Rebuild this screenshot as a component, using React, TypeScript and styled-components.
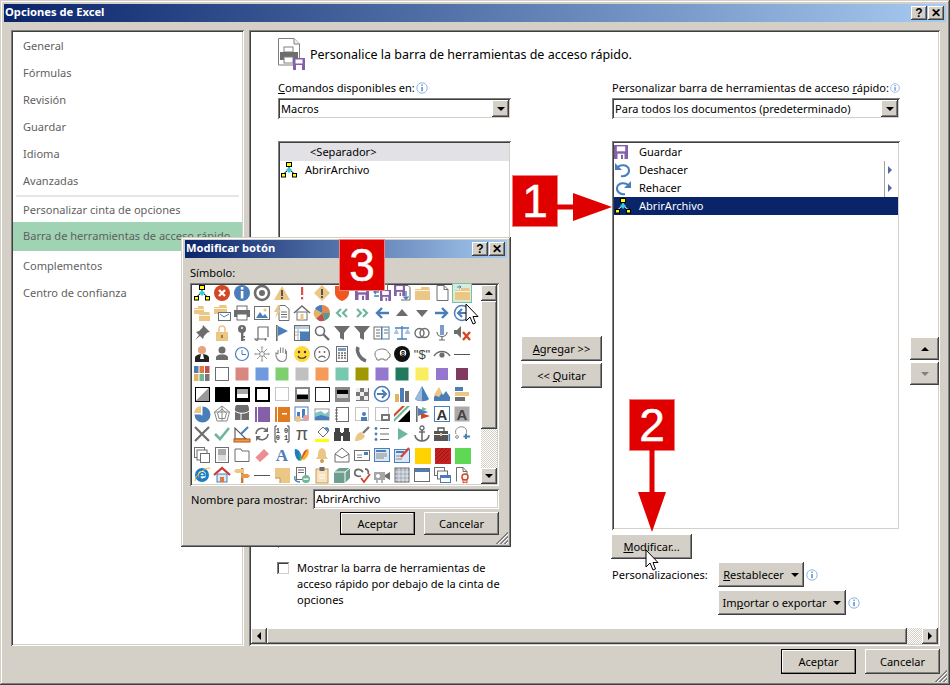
import React from "react";
import styled, { createGlobalStyle } from "styled-components";

const Global = createGlobalStyle`
  html, body { margin: 0; padding: 0; background: #d4d0c8; overflow: hidden; }
  * { box-sizing: border-box; }
  #root { width: 950px; height: 685px; }
`;

const FONT = `"Noto Sans", "Open Sans", "DejaVu Sans", sans-serif`;
const raised = `inset -1px -1px 0 #404040, inset 1px 1px 0 #fff, inset -2px -2px 0 #808080, inset 2px 2px 0 #d4d0c8`;
const sunken = `inset 1px 1px 0 #808080, inset -1px -1px 0 #fff, inset 2px 2px 0 #404040, inset -2px -2px 0 #d4d0c8`;
const dither = `repeating-conic-gradient(#fff 0 25%, #d4d0c8 0 50%) 0 0 / 2px 2px`;

const Win = styled.div`
  position: relative; width: 950px; height: 685px; background: #d4d0c8;
  box-shadow: inset -1px -1px 0 #404040, inset 1px 1px 0 #d4d0c8, inset -2px -2px 0 #808080, inset 2px 2px 0 #fff;
  padding: 4px; display: flex; flex-direction: column;
  font: 11.05px ${FONT}; color: #000; overflow: hidden;
`;
const TitleBar = styled.div`
  height: 18px; flex: none; display: flex; align-items: center; padding: 0 2px 0 1px;
  background: linear-gradient(90deg, #0a246a, #a6caf0); color: #fff; font-weight: 700;
  font-size: 11.2px;
`;
const TitleText = styled.span`flex: 1; line-height: 16px; padding-bottom: 2px;`;
const CapBtn = styled.div`
  width: 16px; height: 14px; margin-left: 1px; background: #d4d0c8; box-shadow: ${raised};
  color: #000; font: 700 12px/14px "Liberation Sans", sans-serif; text-align: center;
`;
const Body = styled.div`
  flex: 1; min-height: 0; display: flex; gap: 5px; padding: 8px 6px 3px 7px;
`;
const Sidebar = styled.div`
  width: 233px; flex: none; background: #fff; box-shadow: ${sunken}; padding: 3px 2px 2px; display: flex; flex-direction: column;
`;
const NavItem = styled.div<{ $on?: boolean }>`
  height: ${p => (p.$on ? 29 : 27)}px; flex: none; line-height: ${p => (p.$on ? 27 : 26)}px; padding-left: 10px; color: #5f5f5f; white-space: nowrap;
  background: ${p => (p.$on ? "#9fd3b3" : "transparent")};
  margin: ${p => (p.$on ? "-2px 0 2px" : "0")};
`;
const NavSep = styled.div`
  height: 2px; background: #e6e6e6; margin: 0 3px; flex: none;
`;
const Main = styled.div`
  flex: 1; min-width: 0; background: #fff; box-shadow: ${sunken}; padding: 2px; display: flex; flex-direction: column;
`;
const Content = styled.div`
  flex: 1; min-height: 0; padding: 6px 0 0 27px; display: flex; flex-direction: column;
`;
const Heading = styled.div`
  height: 32px; flex: none; display: flex; align-items: center; gap: 4px; font-size: 12.5px;
`;
const Columns = styled.div`
  flex: 1; display: flex; margin-top: 8px;
`;
const Col = styled.div<{ $w: number; $ml?: number; $pt?: number }>`
  width: ${p => p.$w}px; margin-left: ${p => p.$ml ?? 0}px; padding-top: ${p => p.$pt ?? 0}px;
  flex: none; display: flex; flex-direction: column;
`;
const Label = styled.div`
  height: 20px; line-height: 18px; white-space: nowrap; display: flex; align-items: center; gap: 1px;
`;
const Select = styled.div`
  height: 21px; background: #fff; box-shadow: ${sunken}; display: flex; align-items: center; padding: 2px 2px 2px 3px;
`;
const SelectText = styled.span`flex: 1; white-space: nowrap;`;
const DropBtn = styled.div`
  width: 17px; height: 17px; background: #d4d0c8; box-shadow: ${raised}; display: flex; align-items: center; justify-content: center;
`;
const Tri = styled.span<{ $c?: string; $up?: boolean }>`
  width: 0; height: 0; border-left: 4px solid transparent; border-right: 4px solid transparent;
  ${p => (p.$up ? "border-bottom" : "border-top")}: 4px solid ${p => p.$c ?? "#000"};
`;
const ListBox = styled.div<{ $h: number; $mt: number }>`
  height: ${p => p.$h}px; margin-top: ${p => p.$mt}px; background: #fff; box-shadow: ${sunken}; padding: 2px; flex: none;
`;
const Row = styled.div<{ $bg?: string; $fg?: string }>`
  height: 18px; display: flex; align-items: center; line-height: 18px;
  background: ${p => p.$bg ?? "transparent"}; color: ${p => p.$fg ?? "#000"}; position: relative;
`;
const RowText = styled.span<{ $ml: number }>`margin-left: ${p => p.$ml}px; white-space: nowrap;`;
const SubMark = styled.span`
  position: absolute; right: 6px; top: 0; bottom: 0; width: 8px; border-left: 1px solid #a0a0a0; display: flex; align-items: center; justify-content: flex-end;
  &::after { content: ""; border-left: 4px solid #4e68a8; border-top: 4px solid transparent; border-bottom: 4px solid transparent; }
`;
const Btn = styled.div<{ $w: number; $def?: boolean; $h?: number }>`
  width: ${p => p.$w}px; height: ${p => p.$h ?? 25}px; flex: none; background: #d4d0c8;
  display: flex; align-items: center; justify-content: center; gap: 7px; white-space: nowrap;
  box-shadow: ${p => (p.$def ? `inset 0 0 0 1px #000, inset -2px -2px 0 #808080, inset 2px 2px 0 #fff` : raised)};
`;
const ModifyBtn = styled(Btn)`margin: 4px 0 0 -1px;`;
const MidStack = styled.div`display: flex; flex-direction: column; gap: 2px;`;
const CheckRow = styled.div`
  display: flex; gap: 8px; margin-top: 12px; line-height: 16px; margin-left: -1px;
`;
const CheckBox = styled.div`
  width: 12px; height: 12px; margin-top: 2px; flex: none; background: #fff; box-shadow: inset 1px 1px 0 #808080, inset -1px -1px 0 #d4d0c8, inset 2px 2px 0 #404040;
`;
const CustomRow = styled.div`
  display: flex; margin-top: 3px; align-items: flex-start;
`;
const CustomLabel = styled.div`width: 106px; margin-top: 5px; flex: none; white-space: nowrap;`;
const CustomBtns = styled.div`display: flex; flex-direction: column; gap: 3px;`;
const BtnWithInfo = styled.div`display: flex; gap: 2px; align-items: center;`;
const HScroll = styled.div`
  height: 16px; flex: none; display: flex; background: ${dither};
`;
const SBtn = styled.div<{ $w?: number; $h?: number }>`
  width: ${p => p.$w ?? 16}px; height: ${p => p.$h ?? 16}px; flex: none; background: #d4d0c8; box-shadow: ${raised};
  display: flex; align-items: center; justify-content: center;
`;
const HThumb = styled.div`width: 640px; flex: none; background: #d4d0c8; box-shadow: ${raised};`;
const HFill = styled.div`flex: 1;`;
const TriH = styled.span<{ $left?: boolean }>`
  width: 0; height: 0; border-top: 4px solid transparent; border-bottom: 4px solid transparent;
  ${p => (p.$left ? "border-right" : "border-left")}: 4px solid #000;
`;
const Footer = styled.div`
  height: 32px; flex: none; display: flex; justify-content: flex-end; gap: 9px; padding: 0 6px 0 0; align-items: flex-start;
`;
const Grip = styled.svg`position: absolute; right: 3px; bottom: 3px;`;

/* dialog: a window over the page */
const Dialog = styled.div`
  position: absolute; left: 181px; top: 237px; width: 330px; height: 310px; background: #d4d0c8;
  box-shadow: inset -1px -1px 0 #404040, inset 1px 1px 0 #d4d0c8, inset -2px -2px 0 #808080, inset 2px 2px 0 #fff;
  padding: 3px 4px 4px; display: flex; flex-direction: column;
`;
const DlgBody = styled.div`padding: 0 8px 0 5px; flex: 1; display: flex; flex-direction: column;`;
const SymLabel = styled.div`height: 25px; line-height: 29px;`;
const IconBox = styled.div`
  height: 203px; flex: none; background: #fff; box-shadow: ${sunken}; padding: 2px; display: flex; justify-content: space-between;
`;
const IconGrid = styled.div`
  display: grid; grid-template-columns: repeat(14, 20px); grid-template-rows: repeat(10, 20.2px); margin-top: -2px; height: 202px; width: 280px;
`;
const IconCell = styled.div<{ $sel?: boolean }>`
  display: flex; align-items: center; justify-content: center;
  ${p => (p.$sel ? "background: #d6ecdf; outline: 1px solid #7fbf9f; outline-offset: -1px;" : "")}
`;
const VScroll = styled.div`
  width: 16px; display: flex; flex-direction: column; background: ${dither};
`;
const VThumb = styled.div`height: 128px; flex: none; background: #d4d0c8; box-shadow: ${raised};`;
const VFill = styled.div`flex: 1;`;
const NameRow = styled.div`display: flex; align-items: center; height: 20px; margin-top: 3px;`;
const NameLabel = styled.div`width: 123px; padding-left: 1px; flex: none; white-space: nowrap;`;
const NameInput = styled.div`
  flex: 1; height: 20px; background: #fff; box-shadow: ${sunken}; padding-left: 3px; line-height: 20px;
`;
const DlgBtns = styled.div`display: flex; justify-content: flex-end; gap: 9px; margin-top: 3px;`;

/* annotations over the screenshot */
const Badge = styled.div<{ $x: number; $y: number }>`
  position: absolute; left: ${p => p.$x}px; top: ${p => p.$y}px; width: 44px; height: 50px; background: #e00000;
  outline: 1px solid #f08080; color: #fff; font: 400 46px/50px "Liberation Sans", sans-serif; text-align: center;
  -webkit-text-stroke: 0.5px #fff;
`;
const Overlay = styled.svg<{ $x: number; $y: number }>`
  position: absolute; left: ${p => p.$x}px; top: ${p => p.$y}px; overflow: visible;
`;

/* drawing helpers */
const F = (d: string, c: string) => <path d={d} fill={c} />;
const S = (d: string, c: string, w = 1) => <path d={d} fill="none" stroke={c} strokeWidth={w} />;
const R = (x: number, y: number, w: number, h: number, c: string, s?: string) => (
  <rect x={x} y={y} width={w} height={h} fill={c} stroke={s} />
);
const C = (x: number, y: number, r: number, c: string, s?: string, sw = 1) => (
  <circle cx={x} cy={y} r={r} fill={c} stroke={s} strokeWidth={sw} />
);
const T = (x: number, y: number, t: string, c: string, size = 14, weight = 400, fam = "Liberation Sans") => (
  <text x={x} y={y} fill={c} fontSize={size} fontWeight={weight} fontFamily={`"${fam}", sans-serif`} textAnchor="middle">{t}</text>
);
const P = "#8560a8", TAN = "#ecc685", B = "#4a7ebb", G = "#6d6d6d", GR = "#6fb79a", RD = "#d24726";

const sitemap = <>{S("M9 4V8M3.5 13L9 8L14.5 13", "#000")}{R(6.5, 1.5, 5, 4, "#ff0", "#000")}{F("M9 6L12 9L9 12L6 9Z", "#3cd")}{R(1.5, 12.5, 4, 3.5, "#ff0", "#000")}{R(12.5, 12.5, 4, 3.5, "#ff0", "#000")}</>;
const sitemapWhite = <>{S("M9 4V8M3.5 13L9 8L14.5 13", "#fff")}{R(6.5, 1.5, 5, 4, "#ff0", "#000")}{F("M9 6L12 9L9 12L6 9Z", "#3cd")}{R(1.5, 12.5, 4, 3.5, "#ff0", "#000")}{R(12.5, 12.5, 4, 3.5, "#ff0", "#000")}</>;
const save = (x = 2, y = 2, s = 14) => <>{R(x, y, s, s, P)}{R(x + s * .2, y + s * .1, s * .6, s * .35, "#fff")}{R(x + s * .25, y + s * .62, s * .5, s * .38, "#fff")}{R(x + s * .5, y + s * .7, s * .14, s * .3, P)}</>;
const folder = (x = 2, y = 3, w = 15, h = 12) => <>{F(`M${x} ${y + 2}h${w * .4}v-2h${w * .55}v2h${w * .05}v${h - 2}h-${w}z`, TAN)}{R(x, y + 3, w, .8, "#fff")}</>;
const sq = (c: string, s?: string) => <>{R(2.5, 2.5, 13, 13, c, s)}</>;
const dashed = <rect x="2.5" y="2.5" width="13" height="13" fill="none" stroke="#888" strokeDasharray="1 1" />;

const rows: React.ReactNode[][] = [
  [
    sitemap,
    <>{C(9, 9, 8, RD)}{S("M6 6L12 12M12 6L6 12", "#fff", 2.4)}</>,
    <>{C(9, 9, 8, B)}{R(7.8, 3, 2.6, 2.6, "#fff")}{R(7.8, 7, 2.6, 7.5, "#fff")}</>,
    <>{C(9, 9, 7, "none", G, 2.6)}{C(9, 9, 3, G)}</>,
    <>{F("M9 2L17 16H1Z", TAN)}{R(8, 6, 2, 6, "#555")}{R(8, 13, 2, 2, "#555")}</>,
    <>{R(8, 3, 2.2, 8, "#d9534f")}{R(8, 13, 2.2, 2.4, "#d9534f")}</>,
    <>{F("M9 1L17 9L9 17L1 9Z", TAN)}{R(8, 5, 2, 6, "#555")}{R(8, 12, 2, 2, "#555")}</>,
    <>{F("M2 2H16V9C16 13 12 16 9 17C6 16 2 13 2 9Z", "#f0561f")}</>,
    save(2, 2, 14),
    <>{R(6.5, .5, 8, 6, "#fff", G)}{save(7, 6, 11)}{S("M1 8H6M3 6L1 8L3 10M1 12H6", B, 1.3)}</>,
    <>{S("M11 1.5H15L17 3.5V16H8", G)}{save(1, 1, 11)}{S("M13 7V15M10.5 12.5L13 15L15.5 12.5", B, 1.4)}</>,
    folder(2, 3, 15, 13),
    <>{F("M4 1.5H11L15 5.5V16.5H4Z", "#fff")}{S("M4 1.5H11L15 5.5V16.5H4ZM11 1.5V5.5H15", G)}</>,
    <>{folder(2, 4, 15, 12)}{S("M4 3H8M6.5 1.5L8 3L6.5 4.5", B)}</>,
  ],
  [
    <>{folder(1, 2, 10, 8)}{folder(6, 8, 11, 9)}</>,
    <>{folder(1, 1, 13, 9)}{R(5.5, 8.5, 12, 8, "#fff", G)}{S("M7 10L11 13L16 10", B)}</>,
    <>{R(4, 2, 10, 5, "#fff", G)}{R(1, 6, 16, 7, G)}{R(4, 10, 10, 6, "#fff", G)}</>,
    <>{R(1.5, 2.5, 15, 13, "#fff", G)}{F("M3 14L7 8L10 12L12 10L15 14Z", B)}{C(12, 6, 1.6, TAN)}</>,
    <>{F("M6 1.5H12L16 5V16.5H6Z", "#fff")}{S("M6 1.5H12L16 5V16.5H6ZM8 8H14M8 10.5H14M8 13H14", G)}{F("M5 1L1 8H4L2 14L8 6H5L7 1Z", TAN)}</>,
    <>{S("M1 9L9 2L17 9", G, 1.6)}{R(4, 8, 10, 8, "#fff", G)}{R(7.5, 10, 3, 6, TAN)}</>,
    <>{F("M9 9V1A8 8 0 0 1 17 9Z", "#e08a50")}{F("M9 9H17A8 8 0 0 1 12 16.5Z", "#5a9a8a")}{F("M9 9L12 16.5A8 8 0 0 1 3 14.5Z", "#c0504d")}{F("M9 9L3 14.5A8 8 0 0 1 2 5Z", "#e5b25d")}{F("M9 9L2 5A8 8 0 0 1 9 1Z", B)}</>,
    <>{S("M8 5L4 9L8 13M14 5L10 9L14 13", GR, 2.2)}</>,
    <>{S("M4 5L8 9L4 13M10 5L14 9L10 13", GR, 2.2)}</>,
    <>{S("M9 4L4 9L9 14M4 9H16", B, 2.4)}</>,
    <>{F("M9 5L15 12H3Z", G)}</>,
    <>{F("M9 13L15 6H3Z", G)}</>,
    <>{S("M9 4L14 9L9 14M14 9H2", B, 2.4)}</>,
    <>{C(9, 9, 7.5, "#fff", B, 1.5)}{S("M9 5L5 9L9 13M5 9H14", B, 2)}</>,
  ],
  [
    <>{F("M10 1L17 8L14.5 8.5L11 12L10 15L7 12L2 16L6 11L3 8L6 7L9.5 3.5Z", G)}</>,
    <>{S("M6 8V5a3 3 0 0 1 6 0V8", TAN, 1.6)}{R(3, 8, 12, 9, TAN)}{R(8, 11, 2, 3, "#a07a3a")}</>,
    <>{C(9, 5, 4, G)}{R(8, 8, 2.4, 9, G)}{R(10, 12, 2, 1.6, G)}{R(10, 15, 2, 1.6, G)}{C(9, 4, 1, "#fff")}</>,
    <>{S("M5 3H15V13M5 3V15C5 17 3 17 2 15H12C12 17 13 16 13 14", G, 1.2)}</>,
    <>{R(3, 1, 1.6, 16, G)}{F("M5 2L15 7L5 12Z", B)}</>,
    <>{R(1.5, 1.5, 15, 15, "#fff", G)}{R(2, 2, 14, 3, "#b8cce0")}{S("M2 8H8M2 11H6M5 5V16", "#b0b0b0")}{R(7, 7.5, 9, 8.5, B)}</>,
    <>{C(7, 7, 4.5, "#fff", G, 1.6)}{S("M10.5 10.5L16 16", G, 2.4)}</>,
    <>{F("M1 2H17L11 9V16L7 14V9Z", G)}</>,
    <>{F("M1 2H17L11 9V16L7 14V9Z", G)}</>,
    <>{R(1, 3, 7.5, 12, "#fff", G)}{R(9, 3, 7, 12, "#fff", B)}{S("M3 6H7M3 9H7M3 12H7M11 6H15M11 9H15", G)}</>,
    <>{S("M9 2V15M4 15H14M2 4H16", B, 1.3)}{F("M.5 10H6L3.3 4.5ZM11.5 10H17.5L14.5 4.5Z", "#a9c4e0")}</>,
    <>{C(6.5, 9, 4.5, "none", G, 1.4)}{C(11.5, 9, 4.5, "none", G, 1.4)}</>,
    <>{R(7, 1, 4, 10, "#7a9cc6")}{S("M4 8C4 14 14 14 14 8M9 13V16M6 16H12", G, 1.2)}</>,
    <>{F("M1 6H4L8 2V14L4 10H1Z", G)}{S("M10 8L17 16M17 8L10 16", RD, 2.4)}</>,
  ],
  [
    <>{C(9, 5, 4, "#e6a57e")}{F("M2 17V12C3 10 6 9 9 9C12 9 15 10 16 12V17Z", "#222")}{F("M8 9H10L11 14H7Z", "#fff")}</>,
    <>{C(9, 5, 3.5, G)}{F("M3 15V12C4 10 6 9.5 9 9.5C12 9.5 14 10 15 12V15Z", G)}</>,
    <>{C(9, 9, 6.5, "#fff", B, 1.2)}{S("M9 5V9.5H13", B)}</>,
    <>{S("M9 2V16M2 9H16M4 4L14 14M14 4L4 14", "#999", 1)}{C(9, 9, 2.4, "#fff", "#888")}{C(9, 2.5, 1.3, "#bbb")}{C(9, 15.5, 1.3, "#bbb")}{C(2.5, 9, 1.3, "#bbb")}{C(15.5, 9, 1.3, "#bbb")}</>,
    <>{S("M5 9V5M7.5 8V2.5M10 8V2.5M12.5 9V4M5 9L3 8V11C4 15 6 16.5 9 16.5C12 16.5 13.5 14 13.5 11V6", "#888", 1.1)}</>,
    <>{C(9, 9, 8, "#ffd93b")}{C(6, 7, 1.2, "#333")}{C(12, 7, 1.2, "#333")}{S("M5 11C6 14 12 14 13 11", "#333", 1.1)}</>,
    <>{C(9, 9, 7.5, "#fff", G, 1.2)}{C(6.5, 7, 1, G)}{C(11.5, 7, 1, G)}{S("M5.5 13C7 10.5 11 10.5 12.5 13", G, 1.1)}</>,
    <>{R(3.5, 1.5, 11, 15, "#fff", G)}{R(5, 3, 8, 3, "#7a9cc6")}{S("M5 8h2M8 8h2M11 8h2M5 10.5h2M8 10.5h2M11 10.5h2M5 13h2M8 13h2M11 13h2", G, 1.4)}</>,
    <>{S("M5 2C3 7 7 14 13 16", G, 3.4)}</>,
    <>{F("M2 9C2 5 6 4 10 4C13 4 15 6 15.5 8L17 9V12L15 13L14 15H11V14H7V15H4L3.5 13C2.5 12 2 11 2 9Z", "#fff")}{S("M2 9C2 5 6 4 10 4C13 4 15 6 15.5 8L17 9V12L15 13L14 15H11V14H7V15H4L3.5 13C2.5 12 2 11 2 9Z", "#777")}</>,
    <>{C(9, 9, 8, "#111")}{C(10, 8, 3.2, "#fff")}{T(10, 10.5, "8", "#000", 7, 700)}</>,
    <>{T(9, 14, '"$"', "#444", 13)}</>,
    <>{S("M1 11C5 5 13 5 17 11", G, 1.4)}{C(9, 10, 2.6, G)}</>,
    <>{R(1, 9, 16, 1, "#555")}</>,
  ],
  [
    <>{R(1, 1, 4.5, 7, "#4a7ebb")}{R(6.5, 1, 4.5, 7, "#e07b39")}{R(12, 1, 4.5, 7, "#c0504d")}{R(1, 9, 4.5, 7, "#e5b25d")}{R(6.5, 9, 4.5, 7, "#6fb79a")}{R(12, 9, 4.5, 7, "#777")}</>,
    sq("#fff", G), sq("#d98880"), sq("#6f9ae0"), sq("#7ed06f"), sq("#c0c0c0"), sq("#f49b5a"), sq("#78c8b0"), sq("#a09800"), sq("#9478d0"), sq("#217a5e"), sq("#f8ee60"),
    <>{R(3, 3, 12, 12, "#9478d0")}</>, <>{R(3, 3, 12, 12, "#803a60")}</>,
  ],
  [
    <>{R(2, 2, 15, 15, "#000")}{F("M3 16L16 3V16Z", "#999")}{F("M3 3H16L3 16Z", "#fff")}</>,
    <>{R(2, 2, 15, 15, "#000")}</>,
    <>{R(2, 2, 15, 15, "#000")}{R(4, 4, 11, 5, "#a9a9a9")}{R(4, 9, 11, 4, "#fff")}</>,
    <>{R(2, 2, 15, 15, "#000")}{R(4, 4, 11, 11, "#fff")}</>,
    dashed,
    <>{R(2, 2, 15, 15, "#888")}{R(4, 4, 11, 5, "#fff")}{R(4, 10, 11, 4, "#000")}</>,
    <>{R(2.5, 2.5, 14, 14, "#fff", "#222")}</>,
    <>{R(2, 2, 15, 15, "#888")}{R(4, 5, 11, 4, "#000")}{R(4, 9, 11, 4, "#ccc")}</>,
    <>{R(3, 3, 13, 13, "#777")}{R(3, 3, 4, 4, "#eee")}{R(11, 3, 4, 4, "#eee")}{R(7, 7, 4, 4, "#eee")}{R(3, 11, 4, 4, "#eee")}{R(11, 11, 4, 4, "#eee")}</>,
    <>{C(9, 9, 7.5, "#fff", B, 1.6)}{S("M9 5L13 9L9 13M13 9H4", B, 2)}</>,
    <>{R(2, 9, 4, 8, "#e5b25d")}{R(7, 3, 4, 14, B)}{R(12, 6, 4, 11, G)}</>,
    <>{F("M9 1L16 14C14 17 4 17 2 14Z", B)}{F("M9 1V16C6 16 4 15 2 14Z", "#9cbad9")}</>,
    <>{F("M1 12L6 3L10 10L13 6L17 12V16H1Z", B)}{F("M1 10L6 2L9 8L6 12Z", TAN)}</>,
    <>{R(2, 2, 8, 4, B)}{R(2, 7, 14, 4, TAN)}{R(2, 12, 10, 4, G)}</>,
  ],
  [
    <>{F("M8 8V1A8 8 0 0 0 1 8Z", TAN)}{F("M9.5 1.5A8 8 0 1 1 1.5 9.5L8 9.5C8 11 9.5 11 9.5 9.5Z", B)}</>,
    <>{S("M9 1L16.5 7L14 16H4L1.5 7ZM9 4L13.5 8L12 13.5H6L4.5 8ZM9 1V16M1.5 7L16.5 7", "#888")}</>,
    <>{R(2, 4, 14, 11, G)}{C(9, 4, 7, G)}{S("M2 6C5 9 13 9 16 6M8 8V16", "#fff")}</>,
    <>{R(2, 2, 15, 15, P)}{R(4, 2, 1, 15, "#fff")}</>,
    <>{R(2, 2, 15, 15, "#e07b1f")}{R(4, 2, 1, 15, "#fff")}{R(9, 8, 5, 1.5, "#fff")}</>,
    <>{R(2, 2, 13, 13, "#fff", B)}{R(4, 7, 3, 6, B)}{R(9, 4, 3, 9, B)}{C(5, 14, 3, TAN)}{C(13, 13, 3, "#e8a0a0")}</>,
    <>{R(2, 4, 14, 11, "#fff", "#999")}{F("M2 8L8 6L12 9L16 6V12L2 12Z", "#7fc4c0")}{F("M2 12L8 10L16 12V15H2Z", B)}</>,
    <>{R(3.5, 2.5, 12, 14, "#fff", G)}{S("M2 5h3M2 8h3M2 11h3M2 14h3", G)}</>,
    <>{dashed}{C(11, 9, 2, B)}{R(8, 12, 6, 4, B)}</>,
    <>{dashed}{R(8, 9, 9, 7, "#777")}{R(10, 11, 5, 3, "#fff")}</>,
    <>{F("M1 14L14 1H17L1 17Z", GR)}{F("M1 9L9 1H12L1 12Z", RD)}{F("M17 5L5 17H17Z", "#000")}</>,
    <>{R(3, 1, 1.6, 16, G)}{F("M5 3L15 7L5 11Z", B)}{F("M8 8L17 11L8 14Z", RD)}{F("M9 2L14 4L9 6Z", GR)}</>,
    <>{R(1.5, 1.5, 15, 15, "#fff", B)}{T(9, 14.5, "A", "#333", 15, 700)}</>,
    <>{R(1.5, 1.5, 15, 15, "#aaa")}{T(9, 14.5, "A", "#444", 15, 700)}</>,
  ],
  [
    <>{S("M2 2L16 16M16 2L2 16", G, 2.2)}</>,
    <>{S("M2 9L7 14L16 3", GR, 2.6)}</>,
    <>{S("M2 14L2 3L13 14Z", "#555", 1.1)}{R(1, 14, 16, 3, "#e5a23b", "#c05020")}{S("M8 9L15 2", B, 2.2)}</>,
    <>{S("M3 9A6 6 0 0 1 14 6M15 9A6 6 0 0 1 4 12", G, 1.6)}{F("M15 2V7H10ZM3 16V11H8Z", G)}</>,
    <>{S("M4 1H2V17H4M14 1H16V17H14", "#444")}{T(9, 8, "1 0", "#444", 7, 700, "Liberation Mono")}{T(9, 15, "0 1", "#444", 7, 700, "Liberation Mono")}</>,
    <>{T(9, 15, "π", "#555", 18)}</>,
    <>{F("M5 7L10 2L15 7L10 12Z", "#fff")}{S("M5 7L10 2L15 7L10 12Z", G)}{F("M11 3C14 1 17 3 16 7L14 5Z", B)}{R(2, 14, 14, 3, "#ff0")}</>,
    <>{R(2, 3, 5, 4, "#444")}{R(11, 3, 5, 4, "#444")}{R(1, 7, 7, 9, "#444")}{R(10, 7, 7, 9, "#444")}{R(7, 8, 4, 3, "#444")}</>,
    <>{F("M2 16C2 12 4 8 8 7L12 11C11 14 7 16 2 16Z", TAN)}{S("M10 8L16 2", "#777", 2.4)}</>,
    <>{C(3, 3.5, 1.4, B)}{C(3, 9, 1.4, B)}{C(3, 14.5, 1.4, B)}{S("M7 3.5H16M7 9H16M7 14.5H16", G, 1.2)}</>,
    <>{F("M5 3L15 9L5 15Z", GR)}</>,
    <>{C(9, 3, 2, "none", G, 1.3)}{S("M9 5V16M6 7H12M2 10C2 14 6 16 9 16C12 16 16 14 16 10", G, 1.6)}</>,
    <>{R(1, 6, 14, 10, "#555")}{S("M5 6V3H11V6", "#555", 1.4)}{R(1, 9, 14, 1, "#fff")}{R(7, 8, 2, 3, TAN)}{R(15.5, 9, 1.6, 7, B)}</>,
    <>{S("M3 9C1 4 6 1 10 2C14 3 14 7 13 9", "#888", 1)}{S("M13 9V14M10.5 11.5H17", B, 2)}{C(4, 12, 1.4, "none", "#888")}</>,
  ],
  [
    <>{R(1.5, 1.5, 10, 10, "#fff", G)}{R(4, 4, 10, 10, "#fff", G)}{R(7.5, 7.5, 9, 9, "#fff", G)}</>,
    <>{R(2.5, 1.5, 13, 15, "#fff", G)}{R(5, 3, 8, 6, "#aaa")}{R(5, 9, 8, 6, "#ddd")}</>,
    <>{S("M2 15.5V3H8L9 5H16V15.5Z", G)}</>,
    <>{F("M2 12L11 3L16 8L7 16H5Z", "#ec8d93")}{S("M2 12L6 16", "#fff", 1.4)}</>,
    <>{T(9, 15, "A", B, 17, 700, "Liberation Serif")}</>,
    <>{F("M2 3C6 3 8 7 9 12L6 15C3 13 1 8 2 3Z", "#1b7dc2")}{F("M9 12C9 8 11 4 15 3L9 14Z", "#e34b2c")}{F("M15 3C17 6 15 11 11 14L9 13Z", "#f7b11a")}{F("M6 6L9 14L7 15Z", "#5cb531")}</>,
    <>{F("M9 2C5 3 5 7 5 10L3 13H15L13 10C13 7 13 3 9 2Z", TAN)}{C(9, 15, 2, "#d09a50")}</>,
    <>{F("M2 8L9 2L16 8V16H2Z", "#fff")}{S("M2 8L9 2L16 8V16H2ZM2 8L9 12L16 8", G)}</>,
    <>{R(1.5, 4.5, 15, 10, "#fff", G)}{S("M4 9H9M4 11.5H9", "#888")}{R(11, 6, 4, 3, B)}</>,
    <>{R(1.5, 2.5, 15, 13, "#dbe8f5", B)}{R(3, 4, 10, 2, B)}{S("M3 8H14M3 10H14M3 12H11", "#888")}</>,
    <>{R(1.5, 3.5, 15, 13, "#dbe8f5", B)}{R(3, 5, 8, 2, B)}{S("M3 10H10M3 13H9", "#888")}{S("M8 11L16 2", "#d9433b", 2.4)}</>,
    <>{R(2, 2, 16, 16, "#ffd200")}</>,
    <>{R(2, 2, 16, 16, "#c9201f")}{S("M2 6L6 2M2 10L10 2M2 14L14 2M4 16L16 4M8 16L16 8M12 16L16 12", "#8b1a1a", 1)}</>,
    <>{R(2, 2, 16, 16, "#5ed855")}</>,
  ],
  [
    <>{C(9, 9, 5.5, "none", "#1b7dc2", 3)}{T(9, 14, "e", "#1b7dc2", 15, 700)}{S("M2 15C2 10 10 2 17 2", "#f0b41e", 1)}</>,
    <>{S("M1 9L9 2L17 9", "#d0342c", 2.2)}{R(4, 8, 10, 8, "#dbe8f5", B)}{R(7, 11, 4, 5, "#e07b39")}</>,
    <>{R(8, 2, 2.4, 15, "#c07a3a")}{F("M3 3H11V7H3L1 5Z", TAN)}{F("M8 8H15L17 10L15 12H8Z", "#e8964a")}</>,
    <>{R(1, 9, 16, 1, "#555")}</>,
    <>{F("M2 2H17V17H7L2 12Z", TAN)}{F("M2 12H7V17Z", "#fff")}{S("M2 12H7V17", "#b99550")}</>,
    <>{R(3.5, 1.5, 9, 12, "#fff", G)}{S("M5 4H11M5 6.5H11", G)}{C(13, 13, 4, GR)}{R(10.5, 12.4, 5, 1.4, "#fff")}{S("M2 10C1 14 3 16 7 16", B, 1.4)}</>,
    <>{R(3, 3, 12, 14, "#f6e3bd", "#c99a50")}{R(6.5, 1, 5, 4, G)}{S("M6 9H12M6 12H12", "#fff")}</>,
    <>{F("M1 6L6 2H17V12L12 17H1Z", "#6e9e8e")}{S("M1 6H12V17M12 6L17 2", "#fff")}</>,
    <>{S("M2 6C2 3 6 3 8 4L10 6M8 10C4 11 1 9 2 6M12 3C15 3 16 6 15 8", G, 1.8)}{S("M8 12L11 16L17 8", RD, 1.8)}</>,
    <>{R(1, 6, 11, 8, "#a6a6a6")}{C(5, 10, 2, "#fff")}{F("M12 9L17 6V14L12 11Z", G)}{S("M4 14V17M9 14V17", G)}</>,
    <>{R(2, 2, 14, 14, "#aab3c0", G)}{S("M6 2V16M10 2V16M14 2V16M2 6H16M2 10H16M2 14H16", "#fff", .6)}</>,
    <>{R(1.5, 2.5, 15, 13, "#fff", G)}{R(2, 3, 14, 3, B)}</>,
    <>{R(1.5, 1.5, 10, 8, "#fff", G)}{R(4.5, 5, 10, 8, "#fff", G)}{R(7.5, 9.5, 10, 7, "#fff", B)}{R(8, 10, 9, 2, B)}</>,
    <>{S("M3.5 15.5V1.5H10L14 5.5V8M10 1.5V5.5H14", G)}{C(12, 11, 3, "#fff", RD, 1.5)}{S("M10 13V17L12 16L14 17V13", RD)}</>,
  ],
];

const Ic = ({ children, s = 18, vb = 18 }: { children: React.ReactNode; s?: number; vb?: number }) => (
  <svg width={s} height={s} viewBox={`0 0 ${vb} ${vb}`}>{children}</svg>
);

const Info = () => (
  <svg width="12" height="12" viewBox="0 0 12 12">
    <circle cx="6" cy="6" r="5.2" fill="#fff" stroke="#8fb4e6" />
    <rect x="5.4" y="2.6" width="1.3" height="1.3" fill="#3b78c4" />
    <rect x="5.4" y="5" width="1.3" height="4.2" fill="#3b78c4" />
  </svg>
);
const Cursor = ({ x, y }: { x: number; y: number }) => (
  <Overlay $x={x} $y={y} width="14" height="23" viewBox="0 0 14 23">
    <path d="M1 1V18L5 14L8 21L10.5 20L8 13.5H13Z" fill="#fff" stroke="#000" />
  </Overlay>
);
const GripIcon = () => (
  <Grip width="13" height="13" viewBox="0 0 13 13">
    <path d="M1 13L13 1M2 13L13 2M5 13L13 5M6 13L13 6M9 13L13 9M10 13L13 10" stroke="#808080" fill="none" />
    <path d="M3 13L13 3M7 13L13 7M11 13L13 11" stroke="#fff" fill="none" />
  </Grip>
);
const PrintSave = () => (
  <svg width="28" height="32" viewBox="0 0 28 32">
    <path d="M.5 .5H16L21.5 6V27H.5Z" fill="#fff" stroke="#808080" />
    <path d="M16 .5V6H21.5" fill="#eee" stroke="#808080" />
    <rect x="6" y="9" width="9" height="5" fill="#fff" stroke="#808080" />
    <rect x="2" y="14" width="18" height="8" fill="#6d6d6d" />
    <rect x="6" y="19" width="9" height="6" fill="#fff" stroke="#808080" />
    <rect x="15" y="20" width="12" height="12" fill="#8560a8" />
    <rect x="17.5" y="21.5" width="7" height="4" fill="#fff" />
    <rect x="18" y="27" width="6" height="5" fill="#fff" />
  </svg>
);
const Undo = () => (
  <Ic><path d="M3 7C6 3 14 3 15 9C15.5 13 11 16 7 15" fill="none" stroke="#4a7ebb" strokeWidth="2" /><path d="M1 2V9H8Z" fill="#4a7ebb" /></Ic>
);
const Redo = () => (
  <Ic><path d="M15 7C12 3 4 3 3 9C2.5 13 7 16 11 15" fill="none" stroke="#4a7ebb" strokeWidth="2" /><path d="M17 2V9H10Z" fill="#4a7ebb" /></Ic>
);

export default function App() {
  return (
    <Win>
      <Global />
      <TitleBar>
        <TitleText>Opciones de Excel</TitleText>
        <CapBtn>?</CapBtn>
        <CapBtn>✕</CapBtn>
      </TitleBar>
      <Body>
        <Sidebar>
          <NavItem>General</NavItem>
          <NavItem>Fórmulas</NavItem>
          <NavItem>Revisión</NavItem>
          <NavItem>Guardar</NavItem>
          <NavItem>Idioma</NavItem>
          <NavItem>Avanzadas</NavItem>
          <NavSep />
          <NavItem>Personalizar cinta de opciones</NavItem>
          <NavItem $on>Barra de herramientas de acceso rápido</NavItem>
          <NavItem>Complementos</NavItem>
          <NavItem>Centro de confianza</NavItem>
        </Sidebar>
        <Main>
          <Content>
            <Heading>
              <PrintSave />
              <span>Personalice la barra de herramientas de acceso rápido.</span>
            </Heading>
            <Columns>
              <Col $w={233}>
                <Label><span><u>C</u>omandos disponibles en:</span><Info /></Label>
                <Select><SelectText>Macros</SelectText><DropBtn><Tri /></DropBtn></Select>
                <ListBox $h={407} $mt={22}>
                  <Row $bg="#e1e1e6"><RowText $ml={30}>&lt;Separador&gt;</RowText></Row>
                  <Row><Ic>{sitemap}</Ic><RowText $ml={7}>AbrirArchivo</RowText></Row>
                </ListBox>
                <CheckRow>
                  <CheckBox />
                  <span>Mostrar la barra de herramientas de<br />acceso rápido por debajo de la cinta de<br />opciones</span>
                </CheckRow>
              </Col>
              <Col $w={81} $ml={10} $pt={258}>
                <MidStack>
                  <Btn $w={81}><span><u>A</u>gregar &gt;&gt;</span></Btn>
                  <Btn $w={81}><span>&lt;&lt; <u>Q</u>uitar</span></Btn>
                </MidStack>
              </Col>
              <Col $w={288} $ml={10}>
                <Label><span>Personalizar barra de herramientas de acceso <u>r</u>ápido:</span><Info /></Label>
                <Select><SelectText>Para todos los documentos (predeterminado)</SelectText><DropBtn><Tri /></DropBtn></Select>
                <ListBox $h={389} $mt={22}>
                  <Row><Ic>{save(0, 2, 14)}</Ic><RowText $ml={7}>Guardar</RowText></Row>
                  <Row><Undo /><RowText $ml={7}>Deshacer</RowText><SubMark /></Row>
                  <Row><Redo /><RowText $ml={7}>Rehacer</RowText><SubMark /></Row>
                  <Row $bg="#0a246a" $fg="#fff"><Ic>{sitemapWhite}</Ic><RowText $ml={7}>AbrirArchivo</RowText></Row>
                </ListBox>
                <ModifyBtn $w={81}><span><u>M</u>odificar...</span></ModifyBtn>
                <CustomRow>
                  <CustomLabel>Personalizaciones:</CustomLabel>
                  <CustomBtns>
                    <BtnWithInfo>
                      <Btn $w={86}><span><u>R</u>establecer</span><Tri /></Btn>
                      <Info />
                    </BtnWithInfo>
                    <BtnWithInfo>
                      <Btn $w={128}><span>Im<u>p</u>ortar o exportar</span><Tri /></Btn>
                      <Info />
                    </BtnWithInfo>
                  </CustomBtns>
                </CustomRow>
              </Col>
              <Col $w={29} $ml={10} $pt={259}>
                <MidStack>
                  <SBtn $w={29} $h={23}><Tri $up /></SBtn>
                  <SBtn $w={29} $h={23}><Tri $c="#808080" /></SBtn>
                </MidStack>
              </Col>
            </Columns>
          </Content>
          <HScroll>
            <SBtn><TriH $left /></SBtn>
            <HThumb />
            <HFill />
            <SBtn><TriH /></SBtn>
          </HScroll>
        </Main>
      </Body>
      <Footer>
        <Btn $w={75} $def><span>Aceptar</span></Btn>
        <Btn $w={75}><span>Cancelar</span></Btn>
      </Footer>
      <GripIcon />

      <Dialog>
        <TitleBar>
          <TitleText>Modificar botón</TitleText>
          <CapBtn>?</CapBtn>
          <CapBtn>✕</CapBtn>
        </TitleBar>
        <DlgBody>
          <SymLabel>Símbolo:</SymLabel>
          <IconBox>
            <IconGrid>
              {rows.flatMap((r, i) =>
                r.map((n, j) => (
                  <IconCell key={`${i}-${j}`} $sel={i === 0 && j === 13}><Ic>{n}</Ic></IconCell>
                ))
              )}
            </IconGrid>
            <VScroll>
              <SBtn><Tri $up /></SBtn>
              <VThumb />
              <VFill />
              <SBtn><Tri /></SBtn>
            </VScroll>
          </IconBox>
          <NameRow>
            <NameLabel>Nombre para mostrar:</NameLabel>
            <NameInput>AbrirArchivo</NameInput>
          </NameRow>
          <DlgBtns>
            <Btn $w={75} $h={23} $def><span>Aceptar</span></Btn>
            <Btn $w={75} $h={23}><span>Cancelar</span></Btn>
          </DlgBtns>
        </DlgBody>
        <GripIcon />
      </Dialog>

      <Badge $x={513} $y={176}>1</Badge>
      <Overlay $x={556} $y={193} width="58" height="28" viewBox="0 0 58 28">
        <path d="M0 11.5H17V0L56 14L17 28V16.5H0Z" fill="#e00000" />
      </Overlay>
      <Badge $x={340} $y={240}>3</Badge>
      <Badge $x={630} $y={400}>2</Badge>
      <Overlay $x={638} $y={450} width="28" height="84" viewBox="0 0 28 84">
        <path d="M11.5 0H16.5V42H28L14 82L0 42H11.5Z" fill="#e00000" />
      </Overlay>
      <Cursor x={465} y={303} />
      <Cursor x={645} y={549} />
    </Win>
  );
}
